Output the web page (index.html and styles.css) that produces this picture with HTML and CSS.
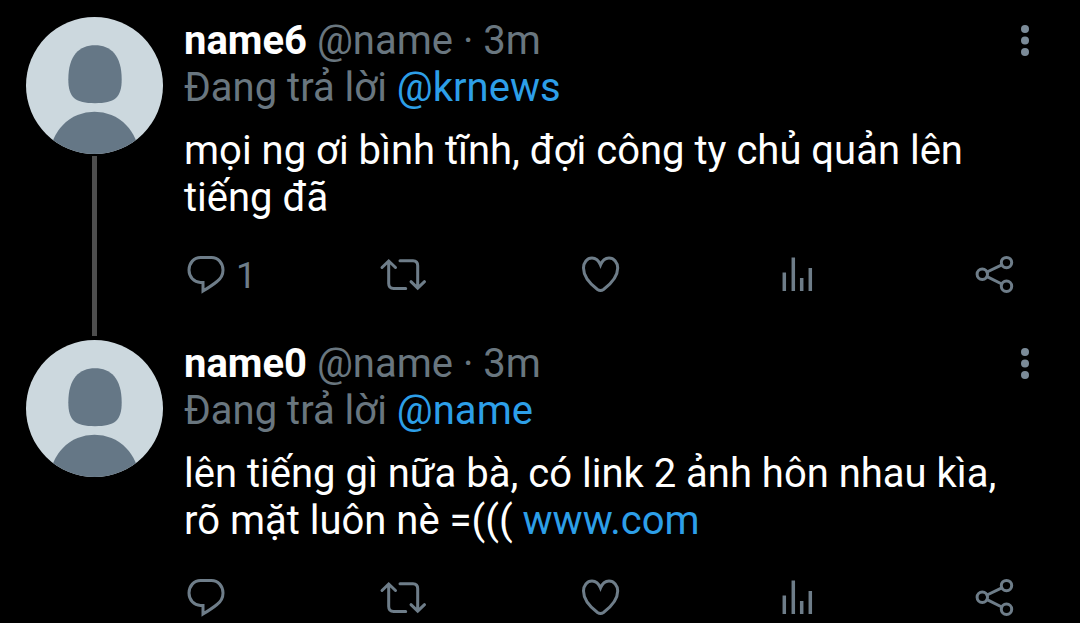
FILE: index.html
```html
<!DOCTYPE html>
<html lang="vi">
<head>
  <meta charset="UTF-8">
  <meta name="viewport" content="width=device-width, initial-scale=1.0">
  <title>Replies</title>
  <link rel="stylesheet" href="styles.css">
</head>
<body>
  <!-- Shared icons -->
  <svg class="sprite" aria-hidden="true">
    <symbol id="avatar" viewBox="0 0 136 136">
      <path d="M68.500 28C84 28 95 38 95 62C95 80 88 85.500 68.500 85.500S42 80 42 62C42 38 53 28 68.500 28z"/>
      <circle cx="68" cy="138" r="44"/>
    </symbol>
    <symbol id="reply" viewBox="0 0 44 44">
      <path d="M16.500 5.500h11C34 5.500 39 11 39 18c0 5-2 8.500-6 11.500c-4 3.300-9 6.500-14 9.500v-8.500h-2.500C10 30 5 25 5 18S10 5.500 16.500 5.500z"/>
    </symbol>
    <symbol id="retweet" viewBox="0 0 44 44" overflow="visible">
      <path d="M1 15.500l6.700-6.500l6.800 6.500M7.700 10v21.500q0 5 5 5h12M19 8.800h13q4.700 0 4.700 5V35M30 29.700l6.700 6.500l6.800-6.500"/>
    </symbol>
    <symbol id="like" viewBox="0 0 44 44">
      <path d="M22.500 13C20.500 8 17 6 14 6C9 6 5.500 10.500 5.500 16C5.500 25 13.500 33 19.500 37.500Q22.500 39.500 25.500 37.500C31.500 33 39.700 25 39.700 16C39.700 10.500 36 6 31 6C28 6 24.500 8 22.500 13z"/>
    </symbol>
    <symbol id="stats" viewBox="0 0 44 44">
      <path d="M9.300 39V20.500M18.300 39V5.500M26.700 39V26M35.300 39V16" stroke-width="3.500" stroke-linecap="butt"/>
    </symbol>
    <symbol id="share" viewBox="0 0 44 44">
      <circle cx="10.300" cy="22.300" r="5.200"/>
      <circle cx="34.500" cy="10.600" r="5.200"/>
      <circle cx="34.500" cy="34.300" r="5.200"/>
      <path d="M15 20l14.800-7.200M15 24.600l14.800 7.400"/>
    </symbol>
    <symbol id="more" viewBox="0 0 12 48">
      <circle cx="6" cy="12" r="4"/>
      <circle cx="6" cy="23.500" r="4"/>
      <circle cx="6" cy="35" r="4"/>
    </symbol>
  </svg>

  <main class="feed">
    <article class="tweet">
      <div class="tweet-side">
        <svg class="avatar" aria-hidden="true"><use href="#avatar"/></svg>
        <div class="thread-line"></div>
      </div>
      <div class="tweet-main">
        <header class="tweet-header">
          <div class="author"><strong>name6</strong> @name · 3m</div>
          <button class="more" type="button" aria-label="Thêm"><svg><use href="#more"/></svg></button>
        </header>
        <div class="replying">Đang trả lời <a href="#">@krnews</a></div>
        <p class="tweet-text">mọi ng ơi bình tĩnh, đợi công ty chủ quản lên tiếng đã</p>
        <div class="actions">
          <button type="button" aria-label="Trả lời"><svg><use href="#reply"/></svg><span class="count">1</span></button>
          <button type="button" aria-label="Tweet lại"><svg><use href="#retweet"/></svg></button>
          <button type="button" aria-label="Thích"><svg><use href="#like"/></svg></button>
          <button type="button" aria-label="Thống kê"><svg><use href="#stats"/></svg></button>
          <button type="button" aria-label="Chia sẻ"><svg><use href="#share"/></svg></button>
        </div>
      </div>
    </article>

    <article class="tweet">
      <div class="tweet-side">
        <svg class="avatar" aria-hidden="true"><use href="#avatar"/></svg>
      </div>
      <div class="tweet-main">
        <header class="tweet-header">
          <div class="author"><strong>name0</strong> @name · 3m</div>
          <button class="more" type="button" aria-label="Thêm"><svg><use href="#more"/></svg></button>
        </header>
        <div class="replying">Đang trả lời <a href="#">@name</a></div>
        <p class="tweet-text">lên tiếng gì nữa bà, có link 2 ảnh hôn nhau kìa, rõ mặt luôn nè =((( <a href="#">www.com</a></p>
        <div class="actions">
          <button type="button" aria-label="Trả lời"><svg><use href="#reply"/></svg></button>
          <button type="button" aria-label="Tweet lại"><svg><use href="#retweet"/></svg></button>
          <button type="button" aria-label="Thích"><svg><use href="#like"/></svg></button>
          <button type="button" aria-label="Thống kê"><svg><use href="#stats"/></svg></button>
          <button type="button" aria-label="Chia sẻ"><svg><use href="#share"/></svg></button>
        </div>
      </div>
    </article>
  </main>
</body>
</html>
```

FILE: styles.css
```css
* {
  box-sizing: border-box;
}
body {
  margin: 0;
  background-color: #000;
  color: #fff;
  font-family: Roboto, "Noto Sans", sans-serif;
  font-size: 40px;
  line-height: 47px;
}
a {
  color: #2d9fe8;
  text-decoration: none;
}
button {
  padding: 0;
  border: none;
  background: none;
  color: inherit;
  font: inherit;
  cursor: pointer;
}
.sprite {
  display: none;
}
.feed {
  padding: 17px 49px 0 26px;
}
.tweet {
  display: flex;
  gap: 21px;
}
.tweet-side {
  display: flex;
  flex-direction: column;
  align-items: center;
  flex: none;
}
.avatar {
  width: 137px;
  height: 137px;
  border-radius: 50%;
  background-color: #ccd8de;
  fill: #657786;
}
.thread-line {
  flex: 1;
  width: 5px;
  margin: 2px 0 4px;
  background-color: #4e4e4e;
}
.tweet-main {
  flex: 1;
  min-width: 0;
}
.tweet:not(:last-child) .tweet-main {
  padding-bottom: 44px;
}
.tweet-header {
  display: flex;
  justify-content: space-between;
}
.author,
.replying {
  color: #69767f;
}
.author strong {
  color: #fff;
  font-weight: 700;
}
.more {
  height: 47px;
}
.more svg {
  display: block;
  width: 12px;
  height: 48px;
  fill: #7b8b98;
}
.tweet-text {
  margin: 16px 0 31px;
}
.actions {
  display: grid;
  grid-template-columns: repeat(4, 1fr) 44px;
  padding-right: 15px;
  color: #6e7d89;
}
.actions button {
  display: flex;
  align-items: center;
  gap: 8px;
  height: 44px;
}
.actions svg {
  width: 44px;
  height: 44px;
  overflow: visible;
  fill: none;
  stroke: currentColor;
  stroke-width: 3;
  stroke-linecap: round;
  stroke-linejoin: miter;
}
.count {
  padding-top: 4px;
  font-size: 36px;
  line-height: 40px;
}
```
